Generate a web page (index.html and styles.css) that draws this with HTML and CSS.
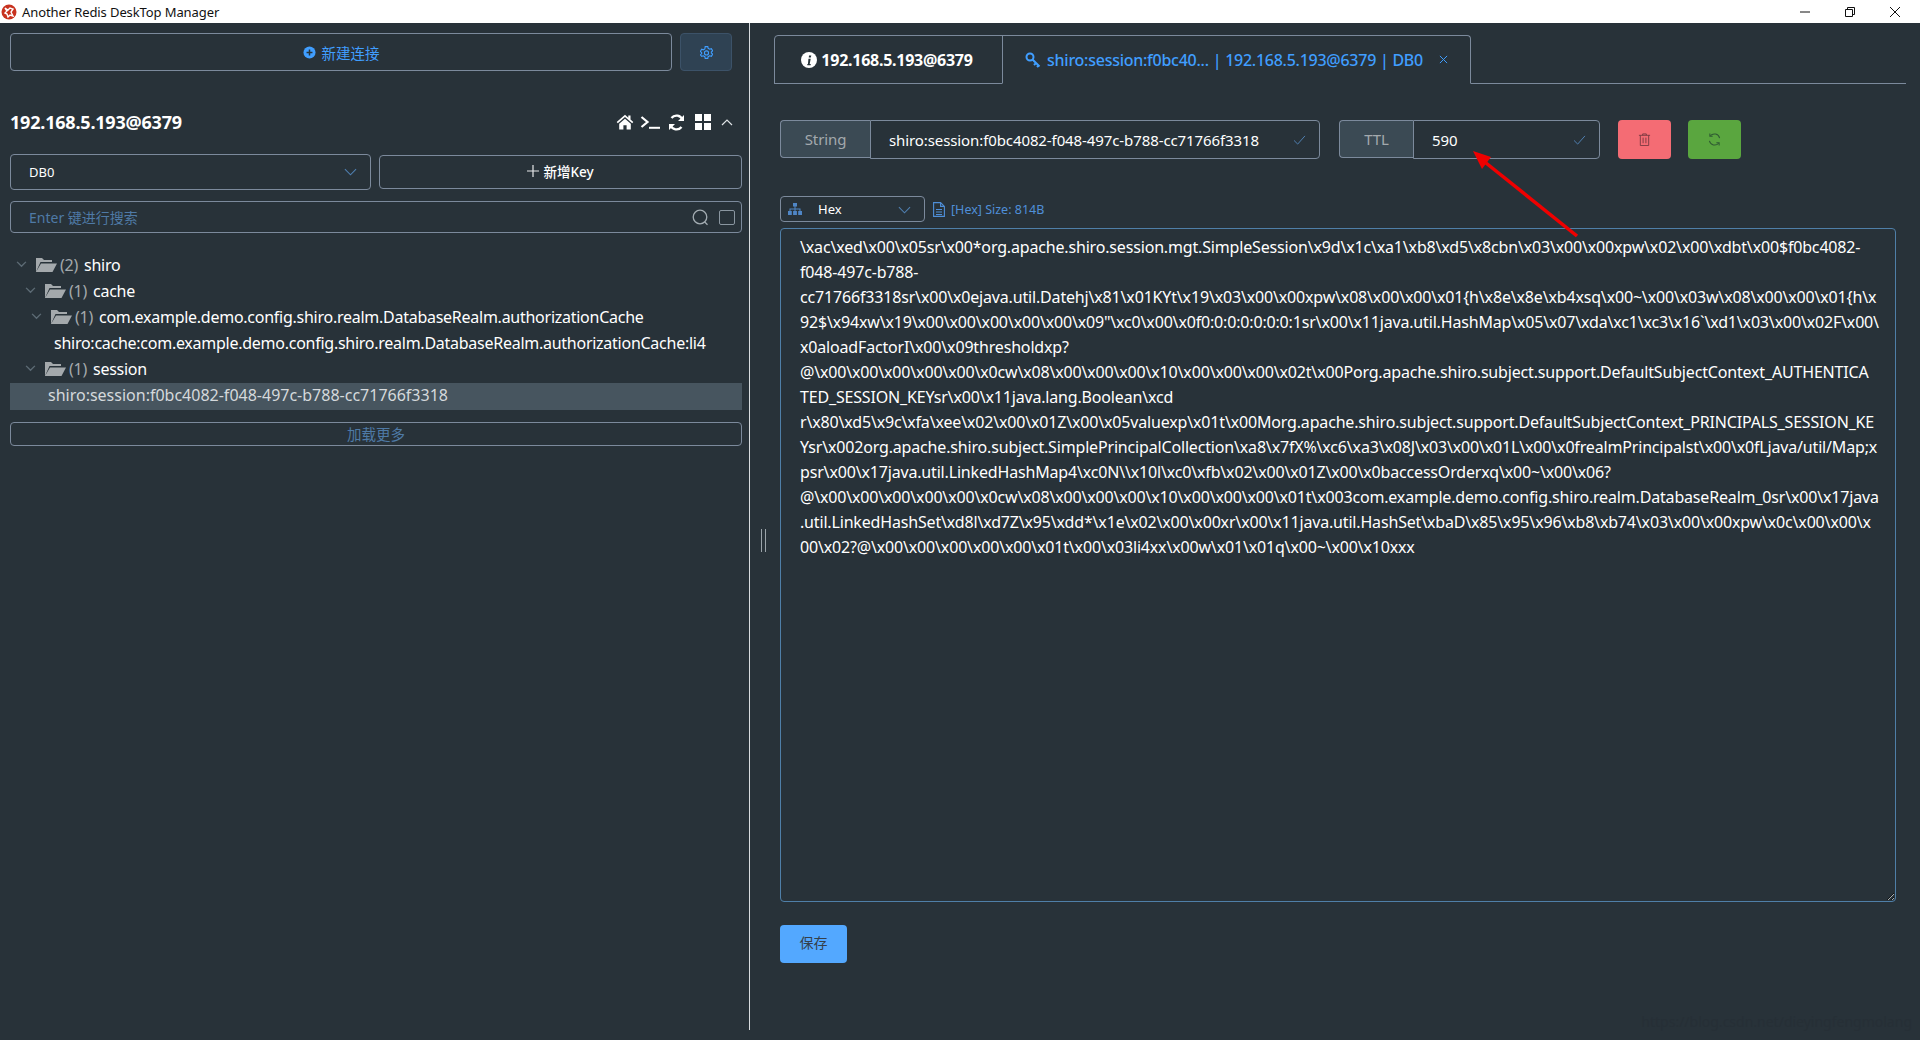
FILE: index.html
```html
<!DOCTYPE html>
<html lang="zh-Hans-CN">
<head>
    <meta charset="UTF-8">
    <title>Another Redis DeskTop Manager</title>
    <link rel="stylesheet" href="styles.css">
</head>
<body>

    <!--title bar-->
    <div class="titlebar">
        <svg class="app-icon" viewBox="0 0 16 16"><circle cx="8" cy="8" r="7.500" fill="#c8321f"/><path d="M4 4l3 2 2-2 3 1-2 3 2 4-3-1-2 2-1-3-2-1 2-2z" fill="none" stroke="#fff" stroke-width="1.400"/></svg>
        <span class="app-name">Another Redis DeskTop Manager</span>
        <div class="win-btns">
            <svg viewBox="0 0 12 12"><path d="M1 6h10" stroke="#111" fill="none"/></svg>
            <svg viewBox="0 0 12 12"><path d="M1.500 3.500h7v7h-7zM3.500 3.500v-2h7v7h-2" stroke="#111" fill="none"/></svg>
            <svg viewBox="0 0 12 12"><path d="M1 1l10 10M11 1L1 11" stroke="#111" fill="none"/></svg>
        </div>
    </div>

    <div class="main">
        <!--left side-->
        <div class="aside">
            <div class="top-row">
                <div class="btn new-conn">
                    <svg class="ico-13" viewBox="0 0 14 14"><circle cx="7" cy="7" r="6.500" fill="#409eff"/><path d="M7 3.800v6.400M3.800 7h6.400" stroke="#263238" stroke-width="1.600"/></svg>
                    <span>新建连接</span>
                </div>
                <div class="btn setting">
                    <svg class="ico-13" viewBox="0 0 14 14"><path d="M5.600.7h2.800l.4 1.800 1.600.9 1.800-.6 1.400 2.400-1.400 1.300v1l1.400 1.300-1.400 2.400-1.800-.6-1.600.9-.4 1.800H5.600l-.4-1.800-1.600-.9-1.800.6L.4 9.500l1.400-1.300v-1L.4 5.900 1.800 3.500l1.800.6 1.600-.9z" fill="none" stroke="#409eff" stroke-width="1.200"/><circle cx="7" cy="7.500" r="2.200" fill="none" stroke="#409eff" stroke-width="1.200"/></svg>
                </div>
            </div>

            <div class="conn-head">
                <span class="conn-name">192.168.5.193@6379</span>
                <div class="conn-icons">
                    <svg class="home" viewBox="0 0 18 16"><path d="M9 .8L.7 8l1.100 1.200L9 3l7.200 6.200L17.300 8 14.500 5.600V1.500h-2.200v2.200zM3.200 9.800V15.500h4.200v-4.200h3.200v4.200h4.200V9.800L9 4.800z" fill="#fff"/></svg>
                    <svg class="term" viewBox="0 0 20 15"><path d="M1.500 2l6 5-6 5" fill="none" stroke="#fff" stroke-width="2.200"/><path d="M9 12.800h11" stroke="#fff" stroke-width="2"/></svg>
                    <svg class="sync" viewBox="0 0 17 17"><path d="M14.500 6A6.300 6.300 0 0 0 3.500 4M2.500 11a6.300 6.300 0 0 0 11 2" fill="none" stroke="#fff" stroke-width="2.300"/><path d="M16 1v6h-6zM1 16v-6h6z" fill="#fff"/></svg>
                    <svg class="grid" viewBox="0 0 16 16"><path d="M0 0h7v7H0zM9 0h7v7H9zM0 9h7v7H0zM9 9h7v7H9z" fill="#fff"/></svg>
                    <svg class="up" viewBox="0 0 12 8"><path d="M1 7l5-5 5 5" fill="none" stroke="#dfe3e6" stroke-width="1.200"/></svg>
                </div>
            </div>

            <div class="db-row">
                <div class="box db-select">
                    <span>DB0</span>
                    <svg class="arrow-down" viewBox="0 0 14 8"><path d="M1 1l6 6 6-6" fill="none" stroke="#4f7fb0" stroke-width="1.200"/></svg>
                </div>
                <div class="box new-key">
                    <svg class="plus" viewBox="0 0 12 12"><path d="M6 0v12M0 6h12" stroke="#e6e8ea" stroke-width="1.200"/></svg>
                    <span>新增Key</span>
                </div>
            </div>

            <div class="box search">
                <span class="placeholder">Enter 键进行搜索</span>
                <svg class="search-ico" viewBox="0 0 17 17"><circle cx="8" cy="8" r="6.800" fill="none" stroke="#a3acb2" stroke-width="1.300"/><path d="M12.500 12.800l3 3" stroke="#a3acb2" stroke-width="1.300"/></svg>
                <span class="check"></span>
            </div>

            <!--key tree-->
            <ul class="tree">
                <li class="node lv1">
                    <svg class="fold" viewBox="0 0 12 8"><path d="M1 1l5 5 5-5" fill="none" stroke="#5d6b75" stroke-width="1.600"/></svg>
                    <svg class="folder" viewBox="0 0 21 16"><path d="M0 15V1h6l2 2h8v2H4.500z M5 6.500h16L16.500 15H0z" fill="#a4a9ac"/></svg>
                    <span class="count">(2)</span><span class="label">shiro</span>
                </li>
                <li class="node lv2">
                    <svg class="fold" viewBox="0 0 12 8"><path d="M1 1l5 5 5-5" fill="none" stroke="#5d6b75" stroke-width="1.600"/></svg>
                    <svg class="folder" viewBox="0 0 21 16"><path d="M0 15V1h6l2 2h8v2H4.500z M5 6.500h16L16.500 15H0z" fill="#a4a9ac"/></svg>
                    <span class="count">(1)</span><span class="label">cache</span>
                </li>
                <li class="node lv3">
                    <svg class="fold" viewBox="0 0 12 8"><path d="M1 1l5 5 5-5" fill="none" stroke="#5d6b75" stroke-width="1.600"/></svg>
                    <svg class="folder" viewBox="0 0 21 16"><path d="M0 15V1h6l2 2h8v2H4.500z M5 6.500h16L16.500 15H0z" fill="#a4a9ac"/></svg>
                    <span class="count">(1)</span><span class="label">com.example.demo.config.shiro.realm.DatabaseRealm.authorizationCache</span>
                </li>
                <li class="node leaf-cache">shiro:cache:com.example.demo.config.shiro.realm.DatabaseRealm.authorizationCache:li4</li>
                <li class="node lv2">
                    <svg class="fold" viewBox="0 0 12 8"><path d="M1 1l5 5 5-5" fill="none" stroke="#5d6b75" stroke-width="1.600"/></svg>
                    <svg class="folder" viewBox="0 0 21 16"><path d="M0 15V1h6l2 2h8v2H4.500z M5 6.500h16L16.500 15H0z" fill="#a4a9ac"/></svg>
                    <span class="count">(1)</span><span class="label">session</span>
                </li>
                <li class="node leaf-active">shiro:session:f0bc4082-f048-497c-b788-cc71766f3318</li>
            </ul>

            <div class="box load-more">加载更多</div>
        </div>

        <!--right side-->
        <div class="content">
            <div class="tabs">
                <div class="tab tab-info">
                    <svg class="key" viewBox="0 0 14 14"><circle cx="7" cy="7" r="7" fill="#fff"/><path d="M7 3h2L8.600 4.800H6.800zM6.500 6h2L7.600 10.400H8.500V11.500H5.500V10.400H6.100z" fill="#263238"/></svg>
                    <span>192.168.5.193@6379</span>
                </div>
                <div class="tab tab-key">
                    <svg class="key" viewBox="0 0 16 16"><circle cx="5" cy="5" r="3.500" fill="none" stroke="#409eff" stroke-width="2"/><path d="M7.500 7.500L14.500 14.500M11 11l-2 2M13.500 13.500l-1.500 1.500" stroke="#409eff" stroke-width="2"/></svg>
                    <span>shiro:session:f0bc40... | 192.168.5.193@6379 | DB0</span>
                    <svg class="close" viewBox="0 0 10 10"><path d="M1 1l8 8M9 1L1 9" stroke="#409eff" stroke-width="1.100"/></svg>
                </div>
            </div>

            <div class="key-body">
                <div class="key-row">
                    <div class="group group-name">
                        <span class="prepend prepend-type">String</span>
                        <div class="group-input">
                            <span>shiro:session:f0bc4082-f048-497c-b788-cc71766f3318</span>
                            <svg class="tick" viewBox="0 0 14 11"><path d="M1 6l4 4 8-9" fill="none" stroke="#4f7fb0" stroke-width="1.100"/></svg>
                        </div>
                    </div>
                    <div class="group group-ttl">
                        <span class="prepend prepend-ttl">TTL</span>
                        <div class="group-input">
                            <span>590</span>
                            <svg class="tick" viewBox="0 0 14 11"><path d="M1 6l4 4 8-9" fill="none" stroke="#4f7fb0" stroke-width="1.100"/></svg>
                        </div>
                    </div>
                    <div class="act act-del">
                        <svg class="ico-13" viewBox="0 0 12 14"><path d="M0 2.500h12M4 2.500V1h4v1.500M1.500 2.500v11h9v-11M4.500 5v6M7.500 5v6" fill="none" stroke="#7b3a42" stroke-width="1"/></svg>
                    </div>
                    <div class="act act-sync">
                        <svg class="ico-13" viewBox="0 0 14 14"><path d="M12.500 5.500A5.800 5.800 0 0 0 2.500 3M1.500 8.500a5.800 5.800 0 0 0 10 2.500" fill="none" stroke="#2f5a33" stroke-width="1.100"/><path d="M2 .5v3h3M12 13.500v-3H9" fill="none" stroke="#2f5a33" stroke-width="1.100"/></svg>
                    </div>
                </div>

                <div class="view-row">
                    <div class="box view-select">
                        <svg class="sitemap" viewBox="0 0 14 12"><path d="M5 0h4v3.500H5zM6.500 3.500h1V5.500H12.500V8h-1V6.500h-4V8h-1V6.500h-4V8h-1V5.500h5zM0 8h3.800v4H0zM5.100 8h3.800v4H5.100zM10.200 8H14v4h-3.800z" fill="#4f86c6"/></svg>
                        <span>Hex</span>
                        <svg class="arrow-down" viewBox="0 0 14 8"><path d="M1 1l6 6 6-6" fill="none" stroke="#4f7fb0" stroke-width="1.200"/></svg>
                    </div>
                    <svg class="file" viewBox="0 0 12 15"><path d="M.6.6h7l3.800 3.800v10H.6zM7.600.6v3.800h3.800M3 7.500h6M3 10h6M3 12.500h6" fill="none" stroke="#4f8fd8" stroke-width="1.100"/></svg>
                    <span class="size-tag">[Hex] Size: 814B</span>
                </div>

                <textarea class="hex-text" wrap="off" readonly spellcheck="false">\xac\xed\x00\x05sr\x00*org.apache.shiro.session.mgt.SimpleSession\x9d\x1c\xa1\xb8\xd5\x8cbn\x03\x00\x00xpw\x02\x00\xdbt\x00$f0bc4082-
f048-497c-b788-
cc71766f3318sr\x00\x0ejava.util.Datehj\x81\x01KYt\x19\x03\x00\x00xpw\x08\x00\x00\x01{h\x8e\x8e\xb4xsq\x00~\x00\x03w\x08\x00\x00\x01{h\x
92$\x94xw\x19\x00\x00\x00\x00\x00\x09"\xc0\x00\x0f0:0:0:0:0:0:0:1sr\x00\x11java.util.HashMap\x05\x07\xda\xc1\xc3\x16`\xd1\x03\x00\x02F\x00\
x0aloadFactorI\x00\x09thresholdxp?
@\x00\x00\x00\x00\x00\x0cw\x08\x00\x00\x00\x10\x00\x00\x00\x02t\x00Porg.apache.shiro.subject.support.DefaultSubjectContext_AUTHENTICA
TED_SESSION_KEYsr\x00\x11java.lang.Boolean\xcd
r\x80\xd5\x9c\xfa\xee\x02\x00\x01Z\x00\x05valuexp\x01t\x00Morg.apache.shiro.subject.support.DefaultSubjectContext_PRINCIPALS_SESSION_KE
Ysr\x002org.apache.shiro.subject.SimplePrincipalCollection\xa8\x7fX%\xc6\xa3\x08J\x03\x00\x01L\x00\x0frealmPrincipalst\x00\x0fLjava/util/Map;x
psr\x00\x17java.util.LinkedHashMap4\xc0N\\x10l\xc0\xfb\x02\x00\x01Z\x00\x0baccessOrderxq\x00~\x00\x06?
@\x00\x00\x00\x00\x00\x0cw\x08\x00\x00\x00\x10\x00\x00\x00\x01t\x003com.example.demo.config.shiro.realm.DatabaseRealm_0sr\x00\x17java
.util.LinkedHashSet\xd8l\xd7Z\x95\xdd*\x1e\x02\x00\x00xr\x00\x11java.util.HashSet\xbaD\x85\x95\x96\xb8\xb74\x03\x00\x00xpw\x0c\x00\x00\x
00\x02?@\x00\x00\x00\x00\x00\x01t\x00\x03li4xx\x00w\x01\x01q\x00~\x00\x10xxx</textarea>

                <div class="save-btn">保存</div>
            </div>

            <div class="drag-handle"></div>
        </div>

        <!--annotation arrow over the ttl field-->
        <svg class="red-arrow" viewBox="0 0 120 100"><path d="M113 87L22 14" stroke="#f00000" stroke-width="3.500" fill="none"/><path d="M9 2L27 8 18 20z" fill="#f00000"/></svg>
        <div class="watermark">https://blog.csdn.net/dieyingfengmolang</div>
    </div>

</body>
</html>
```

FILE: styles.css
```css
/*reset*/
body, ul {
    margin: 0;
    padding: 0;
}
ul {
    list-style: none;
}
svg {
    display: block;
    flex: none;
}

body {
    height: 1040px;
    overflow: hidden;
    background-color: #283239;
    color: #fff;
    font-family: "Noto Sans", "Noto Sans CJK SC", sans-serif;
    font-size: 14px;
}

/*title bar*/
.titlebar {
    display: flex;
    align-items: center;
    height: 23px;
    background-color: #fff;
    color: #111;
    font-size: 13px;
    letter-spacing: -.1px;
}
.app-icon {
    width: 16px;
    height: 16px;
    margin: 0 5px 0 1px;
}
.win-btns {
    display: flex;
    gap: 33px;
    margin-left: auto;
    margin-right: 19px;
}
.win-btns svg {
    width: 12px;
    height: 12px;
}

.main {
    position: relative;
    display: flex;
    height: 1007px;
    padding-bottom: 10px;
}

/*left side*/
.aside {
    width: 732px;
    padding: 10px 7px 0 10px;
    border-right: 1px solid #d8dcdf;
}
.box {
    box-sizing: border-box;
    border: 1px solid #7c8a9c;
    border-radius: 4px;
}
.top-row {
    display: flex;
    gap: 8px;
    height: 38px;
    margin-right: 10px;
}
.btn {
    display: flex;
    justify-content: center;
    align-items: center;
    box-sizing: border-box;
    border: 1px solid #7c8a9c;
    border-radius: 4px;
    color: #409eff;
    font-size: 14.500px;
}
.new-conn {
    flex: 1;
    gap: 6px;
}
.setting {
    width: 52px;
    background-color: #2f4253;
    border-color: #3c5268;
}
.ico-13 {
    width: 13px;
    height: 13px;
}

.conn-head {
    display: flex;
    align-items: center;
    height: 32px;
    margin: 35px 0 16px;
}
.conn-name {
    font-size: 18px;
    font-weight: 700;
    letter-spacing: -.2px;
}
.conn-icons {
    display: flex;
    align-items: center;
    margin-left: auto;
    margin-right: 9px;
}
.home {
    width: 18px;
    height: 16px;
}
.term {
    width: 20px;
    height: 15px;
    margin-left: 6px;
}
.sync {
    width: 17px;
    height: 17px;
    margin-left: 8px;
}
.grid {
    width: 16px;
    height: 16px;
    margin-left: 10px;
}
.up {
    width: 12px;
    height: 8px;
    margin-left: 10px;
}

.db-row {
    display: flex;
    align-items: center;
    gap: 8px;
}
.db-select {
    display: flex;
    align-items: center;
    width: 361px;
    height: 36px;
    padding: 0 13px 0 18px;
    font-size: 13px;
}
.arrow-down {
    width: 13px;
    height: 8px;
    margin-left: auto;
}
.new-key {
    display: flex;
    justify-content: center;
    align-items: center;
    gap: 4px;
    width: 363px;
    height: 34px;
    padding-bottom: 2px;
    font-size: 13.500px;
    font-weight: 500;
}
.plus {
    width: 12px;
    height: 12px;
}

.search {
    display: flex;
    align-items: center;
    height: 32px;
    margin-top: 11px;
    padding: 0 6px 0 18px;
}
.placeholder {
    color: #4f7aa6;
    font-size: 14px;
}
.search-ico {
    width: 17px;
    height: 17px;
    margin-left: auto;
}
.check {
    box-sizing: border-box;
    width: 16px;
    height: 15px;
    margin-left: 10px;
    border: 1px solid #8a96a0;
    border-radius: 2px;
}

/*key tree*/
.tree {
    margin-top: 20px;
    font-size: 16px;
    letter-spacing: -.26px;
}
.node {
    display: flex;
    align-items: center;
    box-sizing: border-box;
    height: 26px;
    padding-bottom: 3px;
    white-space: nowrap;
}
.lv1 {
    padding-left: 6px;
}
.lv2 {
    padding-left: 15px;
}
.lv3 {
    padding-left: 21px;
}
.fold {
    width: 11px;
    height: 7px;
    margin-right: 9px;
}
.folder {
    width: 21px;
    height: 16px;
}
.count {
    width: 24px;
    margin-left: 3px;
    color: #a4a9ac;
}
.leaf-cache {
    padding-left: 44px;
}
.leaf-active {
    height: 27px;
    padding-left: 38px;
    background-color: #47555f;
    color: #d5d9dc;
    letter-spacing: 0;
}
.load-more {
    height: 24px;
    margin-top: 12px;
    color: #4f7aa6;
    font-size: 14.500px;
    line-height: 22px;
    text-align: center;
}

/*right side*/
.content {
    position: relative;
    flex: 1;
    padding: 12px 14px 0 24px;
}
.tabs {
    display: flex;
    height: 48px;
    border-bottom: 1px solid #7c8a9c;
}
.tab {
    display: flex;
    align-items: center;
    box-sizing: border-box;
    height: 49px;
    border: 1px solid #7c8a9c;
    font-size: 16px;
    font-weight: 500;
    letter-spacing: -.26px;
}
.tab-info {
    justify-content: center;
    gap: 4px;
    width: 229px;
    padding-right: 3px;
    border-radius: 4px 0 0 0;
    font-weight: 700;
}
.tab-key {
    justify-content: center;
    gap: 6px;
    width: 469px;
    margin-left: -1px;
    border-bottom-color: #283239;
    border-radius: 0 4px 0 0;
    color: #409eff;
}
.key {
    width: 16px;
    height: 16px;
}
.close {
    width: 9px;
    height: 9px;
    margin-left: 10px;
}

.key-body {
    padding: 0 10px 0 6px;
}
.key-row {
    display: flex;
    margin-top: 36px;
}
.group {
    display: flex;
    height: 39px;
    font-size: 15px;
    letter-spacing: -.1px;
}
.group-name {
    width: 540px;
}
.group-ttl {
    width: 261px;
    margin-left: 19px;
}
.prepend {
    display: flex;
    justify-content: center;
    align-items: center;
    box-sizing: border-box;
    height: 38px;
    border: 1px solid #7c8a9c;
    border-right: 0;
    border-radius: 4px 0 0 4px;
    background-color: #3b4a54;
    color: #a3a9ad;
}
.prepend-type {
    width: 90px;
}
.prepend-ttl {
    width: 74px;
}
.group-input {
    display: flex;
    flex: 1;
    align-items: center;
    box-sizing: border-box;
    padding: 0 13px 0 18px;
    border: 1px solid #7c8a9c;
    border-radius: 0 4px 4px 0;
}
.tick {
    width: 13px;
    height: 10px;
    margin-left: auto;
}
.act {
    display: flex;
    justify-content: center;
    align-items: center;
    width: 53px;
    height: 39px;
    border-radius: 4px;
}
.act-del {
    margin-left: 18px;
    background-color: #f46c74;
}
.act-sync {
    margin-left: 17px;
    background-color: #5aa63f;
}

.view-row {
    display: flex;
    align-items: center;
    height: 26px;
    margin-top: 37px;
}
.view-select {
    display: flex;
    align-items: center;
    width: 145px;
    height: 26px;
    padding: 2px 13px 0 7px;
    font-size: 13px;
}
.view-select span {
    margin-top: -2px;
}
.sitemap {
    width: 14px;
    height: 12px;
    margin: -2px 16px 0 0;
}
.file {
    width: 12px;
    height: 15px;
    margin: 0 6px 0 8px;
}
.size-tag {
    color: #4f8fd8;
    font-size: 12.500px;
}

.hex-text {
    display: block;
    box-sizing: border-box;
    width: 100%;
    height: 674px;
    margin-top: 6px;
    padding: 6px 19px;
    border: 1px solid #4f7fa8;
    border-radius: 4px;
    outline: none;
    overflow: hidden;
    resize: vertical;
    background-color: transparent;
    color: #fff;
    font-family: "Noto Sans", "Noto Sans CJK SC", sans-serif;
    font-size: 16px;
    line-height: 25px;
    letter-spacing: -.17px;
}
.save-btn {
    box-sizing: border-box;
    width: 67px;
    height: 38px;
    margin-top: 23px;
    padding-bottom: 2px;
    border-radius: 4px;
    background-color: #53a8ff;
    color: #35404a;
    font-size: 14px;
    line-height: 36px;
    text-align: center;
}

/*over other content*/
.drag-handle {
    position: absolute;
    top: 506px;
    left: 11px;
    width: 3px;
    height: 23px;
    border-left: 1px solid #9aa3a9;
    border-right: 1px solid #9aa3a9;
}
.red-arrow {
    position: absolute;
    top: 126px;
    left: 1464px;
    width: 120px;
    height: 100px;
}
.watermark {
    position: absolute;
    top: 989px;
    right: 8px;
    color: #262f36;
    font-size: 14px;
    white-space: nowrap;
}
```
